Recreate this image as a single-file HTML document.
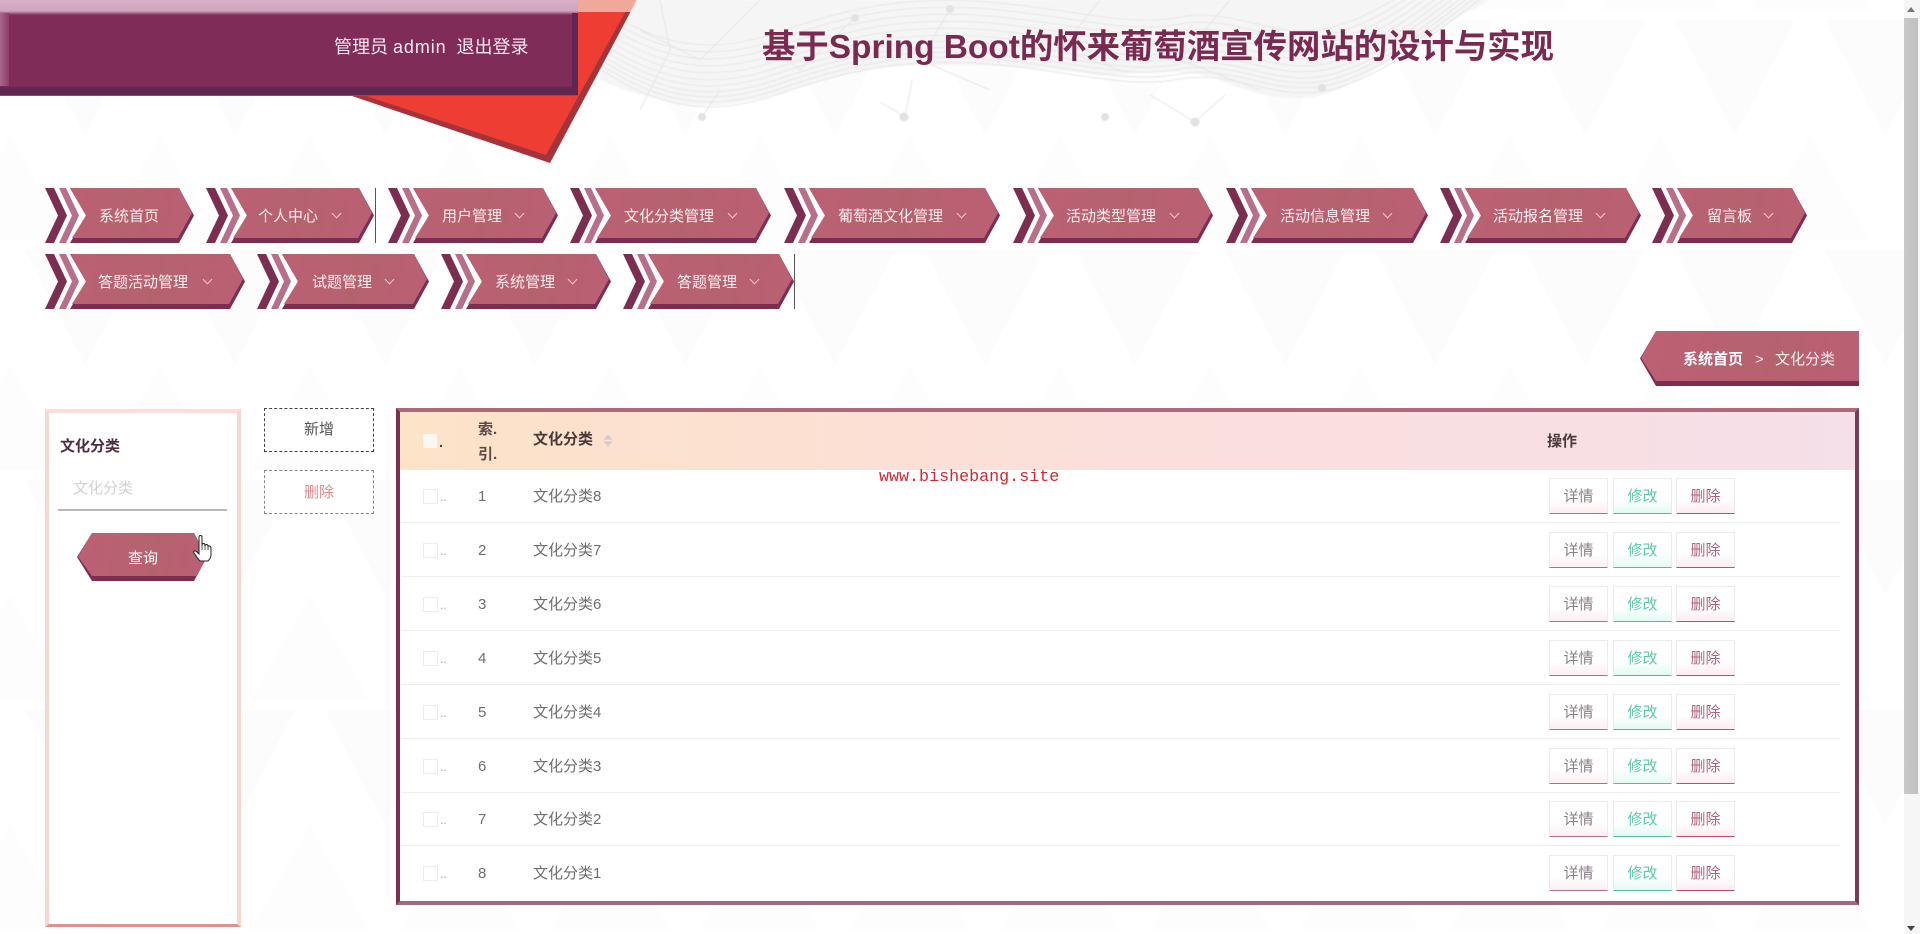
<!DOCTYPE html>
<html lang="zh"><head><meta charset="utf-8"><title>文化分类</title>
<style>
html,body{margin:0;padding:0;width:1920px;height:934px;overflow:hidden;background:#fff;font-family:"Liberation Sans","Noto Sans CJK SC",sans-serif;}
#bg{position:absolute;left:0;top:0}
.abs,.n,.n *,.r,.r *{position:absolute}
.n{height:55px}
.n i,.n b{left:0;top:0;width:100%;height:100%;display:block}
.n .a{background:#7c2e50;clip-path:polygon(0 0,9px 0,22px 50%,9px 100%,0 100%,13px 50%)}
.n .b{background:#b8708a;clip-path:polygon(14px 0,21px 0,34px 50%,21px 100%,14px 100%,27px 50%)}
.n .c{background:#7c2e50;clip-path:polygon(25px 0,calc(100% - 15px) 0,100% 50%,calc(100% - 15px) 100%,25px 100%,41px 50%)}
.n .d{background:linear-gradient(100deg,#bd6075,#b5626f 55%,#bb5f74);clip-path:polygon(25px 0,calc(100% - 15px) 0,calc(100% - 2px) 25px,calc(100% - 16px) 50px,27px 50px,41px 50%)}
.n span{top:18px;line-height:22px;font-size:15px;color:#fdeef0;white-space:nowrap}
.n u{top:22px;width:6px;height:6px;border-right:1.5px solid #f9c3ca;border-bottom:1.5px solid #f9c3ca;transform:rotate(45deg);text-decoration:none}
.r{left:0;width:1920px;height:54px}
.r s{left:401px;width:1439px;top:53px;height:1px;background:#eee}
.r .k{left:423px;top:20px;width:13px;height:13px;border:1px solid #ececec;background:#fff}
.r .o{left:440px;top:18px;line-height:20px;font-size:12px;color:#aaa;text-decoration:none}
.r .x{left:478px;top:17px;line-height:22px;font-size:15px;color:#6e6e6e;text-decoration:none}
.r .t{left:533px;top:17px;line-height:22px;font-size:15px;color:#6e6e6e;text-decoration:none;white-space:nowrap}
.r em{top:9px;width:57px;height:34px;font-style:normal;font-size:15px;line-height:36px;text-align:center;box-sizing:content-box;border:1px solid #ececec;border-bottom-width:1px}
.e1{left:1549px;color:#8a8088;background:linear-gradient(#fff 60%,#fdeef2);border-bottom-color:#b07088!important}
.e2{left:1613px;color:#5ccba8;background:linear-gradient(#fff 60%,#e2faf3);border-bottom-color:#55b8a0!important}
.e3{left:1676px;color:#b0607f;background:linear-gradient(#fff 60%,#fdecf1);border-bottom-color:#b8506a!important}
</style></head>
<body>
<svg id="bg" width="1920" height="934" viewBox="0 0 1920 934" xmlns="http://www.w3.org/2000/svg">
<defs>
<pattern id="tri" width="150" height="230" patternUnits="userSpaceOnUse" patternTransform="translate(20 10)">
<polygon points="5,10 125,10 65,125" fill="#fcfcfc"/>
<polygon points="80,230 140,125 200,230" fill="#fdfdfd"/>
<polygon points="-70,230 -10,125 50,230" fill="#fdfdfd"/>
</pattern>
<path id="w" d="M600,62 C650,95 700,112 770,90 C840,66 900,48 1000,58 C1080,66 1130,82 1180,72 C1240,62 1280,100 1340,80 C1400,60 1440,20 1490,-15" fill="none" stroke="#e6e6e6" stroke-width="1"/>
<filter id="bl"><feGaussianBlur stdDeviation="0.6"/></filter>
</defs>
<rect width="1920" height="934" fill="#fff"/>
<rect width="1920" height="934" fill="url(#tri)"/>
<g filter="url(#bl)">
<path d="M600,0 L600,80 C640,96 680,110 730,104 C790,96 830,72 900,66 C960,64 1040,66 1100,76 C1150,72 1190,66 1230,84 C1270,100 1310,106 1350,84 C1400,56 1440,26 1490,0 Z" fill="#f5f5f5"/>
<use href="#w" y="-55"/><use href="#w" y="-48"/><use href="#w" y="-41"/><use href="#w" y="-34"/><use href="#w" y="-27"/><use href="#w" y="-20"/><use href="#w" y="-14"/><use href="#w" y="-8"/><use href="#w" y="-3"/><use href="#w" y="2"/><use href="#w" y="7"/>
<g fill="none" stroke="#e6e6e6" stroke-width="1">
<path d="M640,30 L700,60 L760,0 M660,0 L670,50 L640,110 M855,18 L800,70 L760,40 M950,9 L920,60 L990,90 M1100,0 L1060,50 L1120,70 M1230,0 L1180,60 L1260,90 M905,117 L880,102 M905,117 L912,80 M1195,122 L1150,95 M1195,122 L1225,95 M702,117 L720,90"/>
</g>
<g fill="#e2e2e2">
<circle cx="702" cy="117" r="4"/><circle cx="904" cy="117" r="4.5"/><circle cx="1105" cy="117" r="4"/><circle cx="1195" cy="122" r="4.5"/><circle cx="1322" cy="88" r="4"/><circle cx="855" cy="18" r="4"/><circle cx="950" cy="9" r="4"/>
</g>
</g>
<polygon points="352,96 550,163 637,0 578,0 578,96" fill="#a5333a"/>
<polygon points="366,96 546,155 632,0 578,0 578,96" fill="#ee3d33"/>
<polygon points="578,0 637,0 631,12 578,12" fill="#f0a89a"/>
<line x1="637" y1="0" x2="600" y2="72" stroke="#fff" stroke-width="1" opacity=".6"/>
</svg>

<div class="abs" style="left:0;top:0;width:578px;height:96px;background:linear-gradient(#d8b0c8 0,#d0a4be 11px,#7f2d58 15px,#7f2d58 86px,#5e2650 88px,#5e2650 95px,#a37a92 96px)"></div>
<div class="abs" style="left:0;top:13px;width:9px;height:73px;background:linear-gradient(90deg,#a8688c,#8a3f68)"></div>
<div class="abs" style="left:572px;top:13px;width:6px;height:81px;background:#5e2650"></div>
<div class="abs" style="left:334px;top:34px;line-height:26px;font-size:18px;color:#fbe8f2;white-space:pre">管理员 <span style="letter-spacing:.9px">admin</span>&nbsp;&nbsp;退出登录</div>
<div class="abs" style="left:762px;top:25px;line-height:46px;font-size:33.400px;font-weight:700;color:#7a2a50;white-space:nowrap">基于Spring Boot的怀来葡萄酒宣传网站的设计与实现</div>

<div class="n" style="left:45px;top:188px;width:149px"><i class="a"></i><i class="b"></i><b class="c"></b><b class="d"></b><span style="left:54px">系统首页</span></div>
<div class="n" style="left:206px;top:188px;width:168px"><i class="a"></i><i class="b"></i><b class="c"></b><b class="d"></b><span style="left:52px">个人中心</span><u style="left:127px"></u></div>
<div class="abs" style="left:375px;top:188px;width:1px;height:55px;background:#555"></div>
<div class="n" style="left:388px;top:188px;width:170px"><i class="a"></i><i class="b"></i><b class="c"></b><b class="d"></b><span style="left:54px">用户管理</span><u style="left:128px"></u></div>
<div class="n" style="left:570px;top:188px;width:201px"><i class="a"></i><i class="b"></i><b class="c"></b><b class="d"></b><span style="left:54px">文化分类管理</span><u style="left:159px"></u></div>
<div class="n" style="left:784px;top:188px;width:216px"><i class="a"></i><i class="b"></i><b class="c"></b><b class="d"></b><span style="left:54px">葡萄酒文化管理</span><u style="left:158px;margin-left:16px"></u></div>
<div class="n" style="left:1013px;top:188px;width:200px"><i class="a"></i><i class="b"></i><b class="c"></b><b class="d"></b><span style="left:53px">活动类型管理</span><u style="left:158px"></u></div>
<div class="n" style="left:1226px;top:188px;width:202px"><i class="a"></i><i class="b"></i><b class="c"></b><b class="d"></b><span style="left:54px">活动信息管理</span><u style="left:158px"></u></div>
<div class="n" style="left:1440px;top:188px;width:201px"><i class="a"></i><i class="b"></i><b class="c"></b><b class="d"></b><span style="left:53px">活动报名管理</span><u style="left:157px"></u></div>
<div class="n" style="left:1652px;top:188px;width:155px"><i class="a"></i><i class="b"></i><b class="c"></b><b class="d"></b><span style="left:55px">留言板</span><u style="left:113px"></u></div>

<div class="n" style="left:45px;top:254px;width:200px"><i class="a"></i><i class="b"></i><b class="c"></b><b class="d"></b><span style="left:53px">答题活动管理</span><u style="left:159px"></u></div>
<div class="n" style="left:257px;top:254px;width:172px"><i class="a"></i><i class="b"></i><b class="c"></b><b class="d"></b><span style="left:55px">试题管理</span><u style="left:129px"></u></div>
<div class="n" style="left:441px;top:254px;width:170px"><i class="a"></i><i class="b"></i><b class="c"></b><b class="d"></b><span style="left:54px">系统管理</span><u style="left:128px"></u></div>
<div class="n" style="left:623px;top:254px;width:171px"><i class="a"></i><i class="b"></i><b class="c"></b><b class="d"></b><span style="left:54px">答题管理</span><u style="left:128px"></u></div>
<div class="abs" style="left:794px;top:254px;width:1px;height:55px;background:#555"></div>

<div class="abs" style="left:1640px;top:331px;width:219px;height:55px;background:#7c2e50;clip-path:polygon(16px 0,100% 0,100% 100%,16px 100%,0 50%)"></div>
<div class="abs" style="left:1640px;top:331px;width:219px;height:50px;background:linear-gradient(100deg,#bd6075,#b5626f 60%,#bb5f74);clip-path:polygon(16px 0,100% 0,100% 100%,16px 100%,1px 54%)"></div>
<div class="abs" style="left:1683px;top:349px;line-height:22px;font-size:15px;font-weight:700;color:#fff;white-space:nowrap">系统首页</div>
<div class="abs" style="left:1755px;top:349px;line-height:22px;font-size:15px;color:#fbe3e6">&gt;</div>
<div class="abs" style="left:1775px;top:349px;line-height:22px;font-size:15px;color:#fdeef0;white-space:nowrap">文化分类</div>

<div class="abs" style="left:45px;top:409px;width:196px;height:518px;box-sizing:border-box;background:#fff;border:4px solid #fbd5cf;border-top-color:#fadfd9;border-bottom:3px solid #e0938a"></div>
<div class="abs" style="left:60px;top:436px;line-height:22px;font-size:15px;font-weight:700;color:#4a3040">文化分类</div>
<div class="abs" style="left:73px;top:478px;line-height:22px;font-size:15px;color:#d2d2d2">文化分类</div>
<div class="abs" style="left:58px;top:509px;width:169px;height:2px;background:#b8b8b8"></div>
<div class="abs" style="left:77px;top:533px;width:130px;height:48px;background:#7c2e50;clip-path:polygon(15px 0,117px 0,130px 50%,117px 100%,15px 100%,0 50%)"></div>
<div class="abs" style="left:77px;top:533px;width:130px;height:43px;background:linear-gradient(100deg,#bd6075,#b5626f 60%,#bb5f74);clip-path:polygon(15px 0,117px 0,130px 55%,120px 100%,15px 100%,1px 55%)"></div>
<div class="abs" style="left:128px;top:548px;line-height:22px;font-size:15px;color:#fff">查询</div>
<svg class="abs" style="left:193px;top:535px" width="20" height="27" viewBox="0 0 20 27"><path d="M6,2 C6,0 9,0 9,2 L9,10 C9,8 12,8 12,10 L12,11 C12,9 15,9 15,11 L15,12 C15,10 18,11 18,13 L18,20 C18,23 16,25 15,26 L7,26 C5,24 3,21 1,18 C0,16 2,15 4,17 L6,19 Z" fill="#fff" stroke="#222" stroke-width="1"/><path d="M9,10 V15 M12,11 V15 M15,12 V15" stroke="#222" stroke-width=".8" fill="none"/></svg>

<div class="abs" style="left:264px;top:408px;width:110px;height:44px;box-sizing:border-box;border:1px dashed #444;background:#fff;text-align:center;line-height:42px;font-size:15px;color:#555">新增</div>
<div class="abs" style="left:264px;top:470px;width:110px;height:44px;box-sizing:border-box;border:1px dashed #888;background:#fff;text-align:center;line-height:44px;font-size:15px;color:#e08a8a">删除</div>

<div class="abs" style="left:396px;top:408px;width:1463px;height:497px;box-sizing:border-box;background:#fff;border-style:solid;border-width:4px;border-color:#b0697a #7c3a55 #a06a80 #7c3050"></div>
<div class="abs" style="left:400px;top:412px;width:1455px;height:58px;background:linear-gradient(90deg,#fde3c8,#fbdfdc 50%,#f5dfe8)"></div>
<div class="abs" style="left:423px;top:434px;width:14px;height:14px;background:#fbf7f5"></div>
<div class="abs" style="left:439px;top:432px;line-height:20px;font-size:14px;font-weight:700;color:#4a3a3a">.</div>
<div class="abs" style="left:478px;top:417px;line-height:25px;font-size:15px;font-weight:700;color:#5a4848">索.<br>引.</div>
<div class="abs" style="left:533px;top:429px;line-height:22px;font-size:15px;font-weight:700;color:#4a3a3a">文化分类</div>
<svg class="abs" style="left:603px;top:434px" width="10" height="13" viewBox="0 0 11 14"><path d="M5.500,0 L10.500,6 H0.500 Z M0.500,8 H10.500 L5.500,14 Z" fill="#d4cccc"/></svg>
<div class="abs" style="left:1547px;top:431px;line-height:22px;font-size:15px;font-weight:700;color:#4a3a3a">操作</div>

<div class="r" style="top:469px"><s></s><div class="k"></div><a class="o">..</a><a class="x">1</a><a class="t">文化分类8</a><em class="e1">详情</em><em class="e2">修改</em><em class="e3">删除</em></div>
<div class="r" style="top:523px"><s></s><div class="k"></div><a class="o">..</a><a class="x">2</a><a class="t">文化分类7</a><em class="e1">详情</em><em class="e2">修改</em><em class="e3">删除</em></div>
<div class="r" style="top:577px"><s></s><div class="k"></div><a class="o">..</a><a class="x">3</a><a class="t">文化分类6</a><em class="e1">详情</em><em class="e2">修改</em><em class="e3">删除</em></div>
<div class="r" style="top:631px"><s></s><div class="k"></div><a class="o">..</a><a class="x">4</a><a class="t">文化分类5</a><em class="e1">详情</em><em class="e2">修改</em><em class="e3">删除</em></div>
<div class="r" style="top:685px"><s></s><div class="k"></div><a class="o">..</a><a class="x">5</a><a class="t">文化分类4</a><em class="e1">详情</em><em class="e2">修改</em><em class="e3">删除</em></div>
<div class="r" style="top:739px"><s></s><div class="k"></div><a class="o">..</a><a class="x">6</a><a class="t">文化分类3</a><em class="e1">详情</em><em class="e2">修改</em><em class="e3">删除</em></div>
<div class="r" style="top:792px"><s></s><div class="k"></div><a class="o">..</a><a class="x">7</a><a class="t">文化分类2</a><em class="e1">详情</em><em class="e2">修改</em><em class="e3">删除</em></div>
<div class="r" style="top:846px"><div class="k"></div><a class="o">..</a><a class="x">8</a><a class="t">文化分类1</a><em class="e1">详情</em><em class="e2">修改</em><em class="e3">删除</em></div>

<div class="abs" style="left:879px;top:467px;line-height:22px;font-family:'Liberation Mono',monospace;font-size:16.700px;color:#d0282e;white-space:nowrap">www.bishebang.site</div>

<div class="abs" style="left:1904px;top:0;width:16px;height:934px;background:#f6f6f6"></div>
<div class="abs" style="left:1904px;top:18px;width:14px;height:776px;background:linear-gradient(90deg,#c9c9c9,#bfbfbf)"></div>
<svg class="abs" style="left:1906px;top:6px" width="10" height="8" viewBox="0 0 10 8"><path d="M5,1 L9,6 H1 Z" fill="#777"/></svg>
<svg class="abs" style="left:1906px;top:924px" width="10" height="8" viewBox="0 0 10 8"><path d="M1,2 H9 L5,7 Z" fill="#444"/></svg>
</body></html>
